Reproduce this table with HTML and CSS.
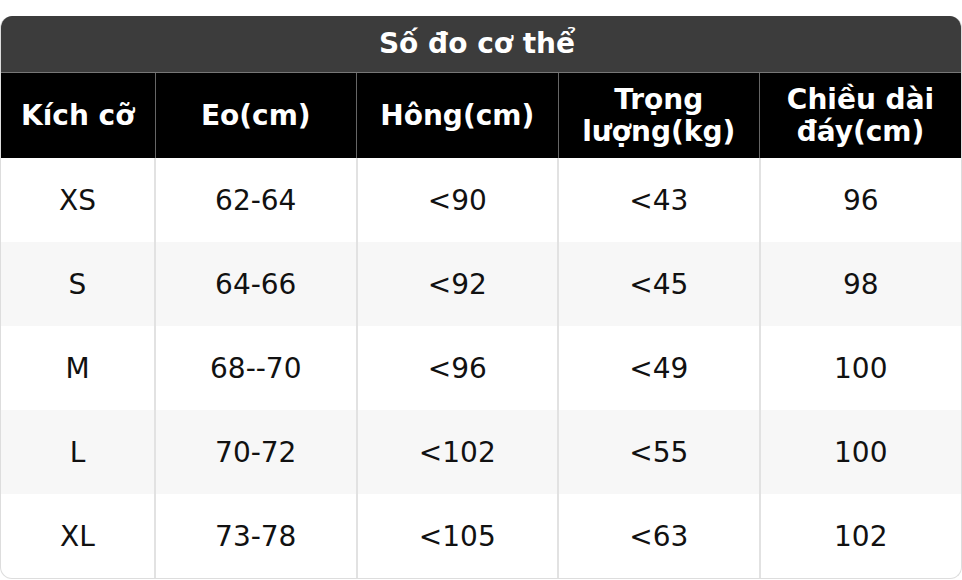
FILE: index.html
```html
<!doctype html>
<html>
  <head>
    <meta charset="utf-8">
    <title>Số đo cơ thể</title>
    <link rel="stylesheet" href="styles.css">
  </head>
  <body>
    <div class="size-chart">
      <div class="chart-title">Số đo cơ thể</div>
      <table class="chart-table">
        <colgroup>
          <col class="col-size">
          <col class="col-data">
          <col class="col-data">
          <col class="col-data">
          <col class="col-data">
        </colgroup>
        <thead>
          <tr>
            <th>Kích cỡ</th>
            <th>Eo(cm)</th>
            <th>Hông(cm)</th>
            <th>Trọng lượng(kg)</th>
            <th>Chiều dài đáy(cm)</th>
          </tr>
        </thead>
        <tbody>
          <tr><td>XS</td><td>62-64</td><td>&lt;90</td><td>&lt;43</td><td>96</td></tr>
          <tr><td>S</td><td>64-66</td><td>&lt;92</td><td>&lt;45</td><td>98</td></tr>
          <tr><td>M</td><td>68--70</td><td>&lt;96</td><td>&lt;49</td><td>100</td></tr>
          <tr><td>L</td><td>70-72</td><td>&lt;102</td><td>&lt;55</td><td>100</td></tr>
          <tr><td>XL</td><td>73-78</td><td>&lt;105</td><td>&lt;63</td><td>102</td></tr>
        </tbody>
      </table>
    </div>
  </body>
</html>
```

FILE: styles.css
```css
/* Estilos gerais */
body {
  font-family: "DejaVu Sans", sans-serif;
  margin: 16px 0 0;
  padding: 0;
  background-color: #fff;
  color: #111;
}

/* Tabela de medidas */
.size-chart {
  border: 1px solid #ddd;
  border-top: none;
  border-radius: 12px;
  overflow: hidden;
}

.chart-title {
  height: 56px;
  line-height: 56px;
  padding-right: 8px;
  background-color: #3c3c3c;
  color: #fff;
  font-size: 28px;
  font-weight: bold;
  text-align: center;
  border-bottom: 1px solid #777;
}

.chart-table {
  width: 100%;
  border-collapse: collapse;
  table-layout: fixed;
}

.col-size {
  width: 154px;
}

/* Cabeçalho */
.chart-table th {
  height: 85px;
  padding: 0 8px;
  background-color: #000;
  color: #fff;
  font-size: 28px;
  font-weight: bold;
  line-height: 32px;
  text-align: center;
  border-left: 1px solid #666;
}

.chart-table th:first-child,
.chart-table td:first-child {
  border-left: none;
}

/* Linhas */
.chart-table td {
  height: 84px;
  padding: 0;
  font-size: 28px;
  text-align: center;
  border-left: 2px solid #e2e2e2;
}

.chart-table tbody tr:nth-child(even) {
  background-color: #f7f7f7;
}
```
